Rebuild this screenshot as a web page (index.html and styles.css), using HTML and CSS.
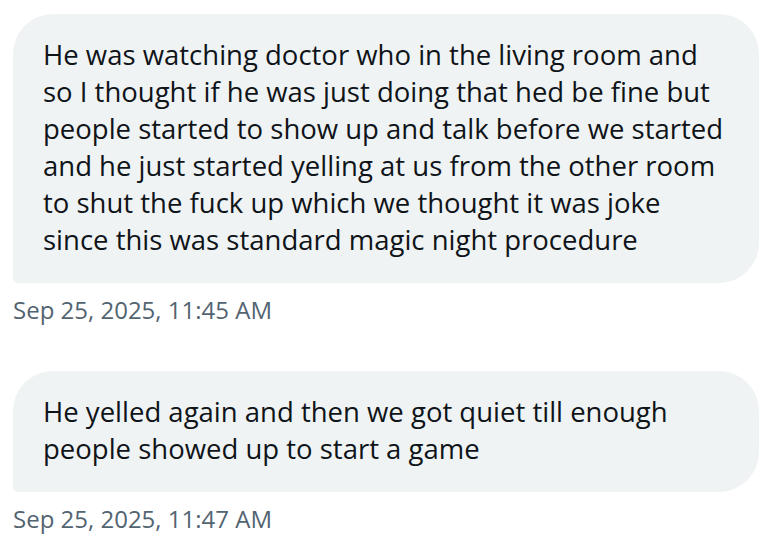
FILE: index.html
```html
<!doctype html>
<html>
<head>
<meta charset="UTF-8">
<link rel="stylesheet" href="styles.css">
<title>Viestit</title>
</head>
<body>
    <div class="viestit">

        <div class="viesti">
            <div class="kupla">He was watching doctor who in the living room and<br>so I thought if he was just doing that hed be fine but<br>people started to show up and talk before we started<br>and he just started yelling at us from the other room<br>to shut the fuck up which we thought it was joke<br>since this was standard magic night procedure</div>
            <div class="aika">Sep 25, 2025, 11:45 AM</div>
        </div>

        <div class="viesti">
            <div class="kupla">He yelled again and then we got quiet till enough<br>people showed up to start a game</div>
            <div class="aika">Sep 25, 2025, 11:47 AM</div>
        </div>

    </div>
</body>
</html>
```

FILE: styles.css
```css
body {
    margin: 0;
    background-color: #fff;
    font-family: "Open Sans", "Noto Sans", sans-serif;
}

.viestit {
    display: flex;
    flex-direction: column;
    gap: 46px;
    padding: 14px 12px 0px 13px;
}

.kupla {
    background-color: #eff3f4;
    color: #0f1419;
    font-size: 27.5px;
    line-height: 37px;
    padding: 22px 30px 25px 30px;
    border-radius: 40px 40px 40px 5px;
    white-space: nowrap;
}

.aika {
    color: #536471;
    font-size: 24px;
    line-height: 30px;
    margin-top: 12px;
}
```
